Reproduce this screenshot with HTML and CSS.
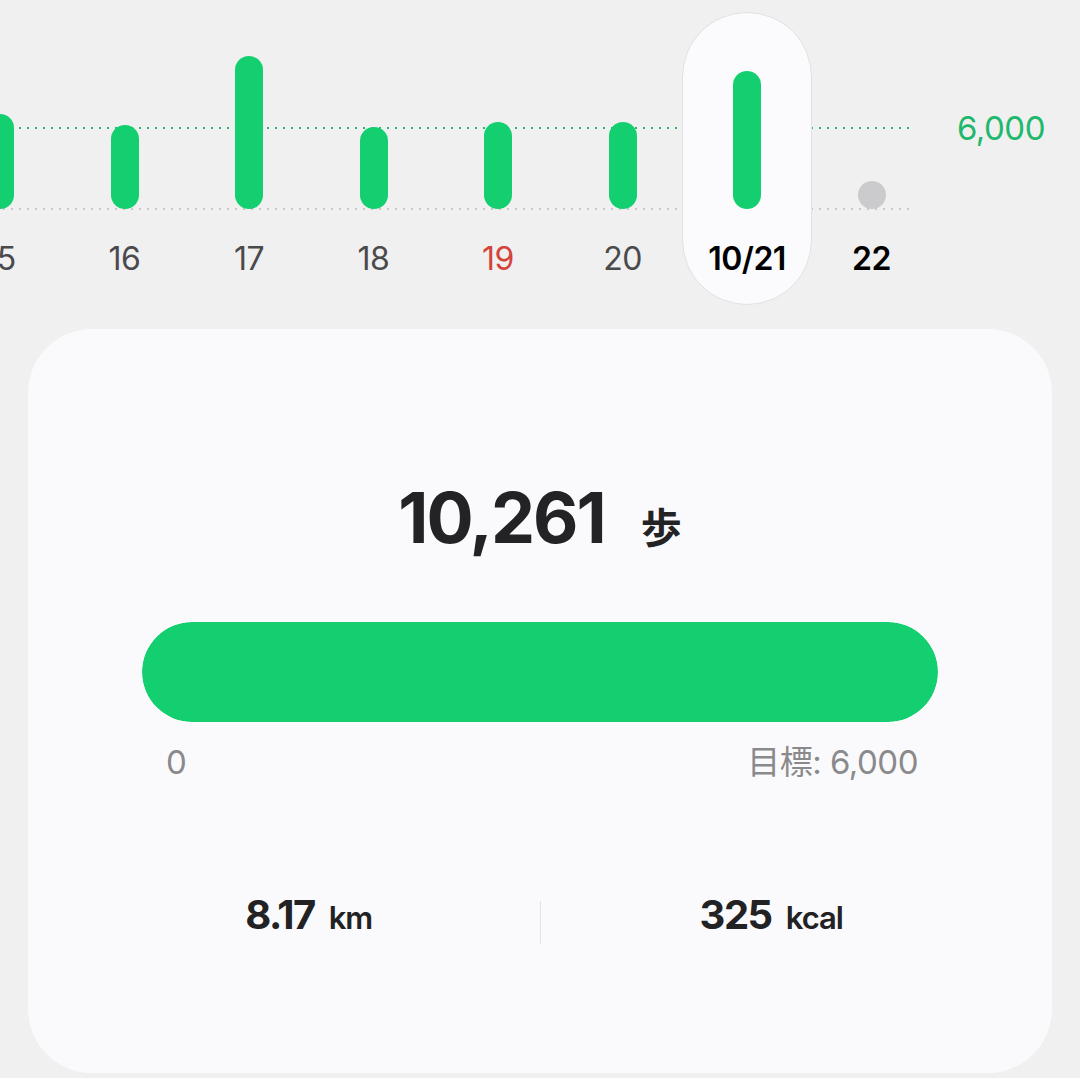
FILE: index.html
```html
<!DOCTYPE html>
<html lang="ja">
<head>
    <meta charset="UTF-8">
    <meta name="viewport" content="width=device-width, initial-scale=1.0">
    <title>歩数</title>
    <link rel="stylesheet" href="styles.css">
</head>
<body>
    <div class="chart-row">
        <div class="chart">
            <div class="days">
                <div class="day"><div class="plot"><span class="bar" style="height:95px"></span></div><span class="label">15</span></div>
                <div class="day"><div class="plot"><span class="bar" style="height:84px"></span></div><span class="label">16</span></div>
                <div class="day"><div class="plot"><span class="bar" style="height:153px"></span></div><span class="label">17</span></div>
                <div class="day"><div class="plot"><span class="bar" style="height:82px"></span></div><span class="label">18</span></div>
                <div class="day"><div class="plot"><span class="bar" style="height:87px"></span></div><span class="label holiday">19</span></div>
                <div class="day"><div class="plot"><span class="bar" style="height:87px"></span></div><span class="label">20</span></div>
                <div class="day selected"><div class="plot"><span class="bar" style="height:138px"></span></div><span class="label">10/21</span></div>
                <div class="day future"><div class="plot"><span class="dot"></span></div><span class="label">22</span></div>
            </div>
        </div>
        <span class="goal-line-label">6,000</span>
    </div>

    <div class="card">
        <div class="total">
            <span class="total-value">10,261</span>
            <span class="total-unit">歩</span>
        </div>

        <div class="progress">
            <div class="progress-track"><div class="progress-fill" style="width:100%"></div></div>
            <div class="progress-labels">
                <span>0</span>
                <span>目標: 6,000</span>
            </div>
        </div>

        <div class="stats">
            <div class="stat"><span class="stat-value">8.17</span><span class="stat-unit">km</span></div>
            <div class="stat-divider"></div>
            <div class="stat"><span class="stat-value">325</span><span class="stat-unit">kcal</span></div>
        </div>
    </div>
</body>
</html>
```

FILE: styles.css
```css
body {
    margin: 0;
    background-color: #f0f0f0;
    font-family: "Inter", "Noto Sans CJK JP", sans-serif;
    color: #232326;
    height: 1078px;
    overflow: hidden;
}

/* weekly chart */
.chart-row {
    display: flex;
    align-items: flex-start;
}
.chart {
    width: 912px;
    padding-top: 12px;
    overflow: hidden;
    background-image:
        linear-gradient(to right, #2fb574 0 2px, transparent 2px),
        linear-gradient(to right, #c9c9cb 0 2px, transparent 2px);
    background-size: 8px 2px, 8px 2px;
    background-position: 3px 127px, 3px 208px;
    background-repeat: repeat-x;
}
.days {
    display: flex;
    margin-left: -62.25px;
}
.day {
    flex: 0 0 124.5px;
    box-sizing: border-box;
    height: 293px;
    border: 1px solid transparent;
    border-radius: 65px;
    display: flex;
    flex-direction: column;
    align-items: center;
}
.day.selected {
    flex-basis: 130px;
    margin: 0 -2.75px;
    background: #fbfbfd;
    border-color: #e1e1e3;
}
.plot {
    height: 196px;
    display: flex;
    align-items: flex-end;
}
.bar {
    display: block;
    width: 28px;
    border-radius: 14px;
    background: #13cf6f;
}
.dot {
    display: block;
    width: 28px;
    height: 28px;
    border-radius: 50%;
    background: #cbcbcd;
}
.label {
    margin-top: 30px;
    font-size: 32px;
    line-height: 40px;
    color: #4a4a4c;
    letter-spacing: -0.5px;
}
.label.holiday {
    color: #d4433a;
}
.day.selected .label,
.day.future .label {
    color: #000;
    font-weight: 600;
}
.goal-line-label {
    margin: 108px 0 0 45px;
    font-size: 33px;
    line-height: 40px;
    color: #1fb86c;
    letter-spacing: -0.5px;
}

/* summary card */
.card {
    box-sizing: border-box;
    margin: 24px 28px 0;
    height: 744px;
    padding-top: 154px;
    background: #fafafc;
    border-radius: 64px;
}
.total {
    display: flex;
    justify-content: center;
    align-items: baseline;
    height: 70px;
    line-height: 70px;
}
.total-value {
    font-size: 70px;
    font-weight: 700;
    letter-spacing: -2px;
}
.total-unit {
    margin-left: 36px;
    font-size: 41px;
    font-weight: 700;
    font-family: "Noto Sans CJK JP", sans-serif;
}
.progress {
    padding: 0 114px;
    margin-top: 69px;
}
.progress-track {
    height: 100px;
    border-radius: 50px;
    overflow: hidden;
}
.progress-fill {
    height: 100%;
    border-radius: 50px;
    background: #13cf6f;
}
.progress-labels {
    display: flex;
    justify-content: space-between;
    padding: 0 20px 0 24px;
    margin-top: 20px;
    font-size: 33px;
    line-height: 40px;
    color: #8a8a8c;
    letter-spacing: -0.5px;
}
.stats {
    display: grid;
    grid-template-columns: 1fr 1px 1fr;
    padding: 0 50px;
    margin-top: 109px;
}
.stat {
    text-align: center;
    line-height: 48px;
    color: #222224;
}
.stat-value {
    font-size: 40px;
    font-weight: 700;
    letter-spacing: -1.5px;
}
.stat-unit {
    margin-left: 14px;
    font-size: 31px;
    font-weight: 600;
    letter-spacing: -1px;
}
.stat-divider {
    height: 43px;
    margin-top: 10px;
    background: #e2e2e4;
}
```
